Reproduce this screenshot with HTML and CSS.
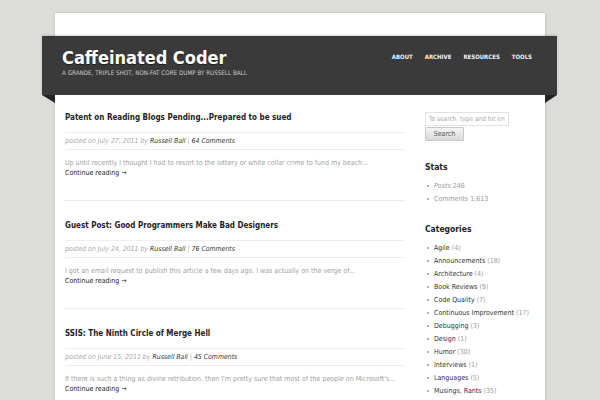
FILE: index.html
```html
<!DOCTYPE html>
<html>
<head>
<meta charset="utf-8">
<link rel="stylesheet" href="styles.css">
</head>
<body>
<div class="page">
  <header class="masthead">
    <div class="brand">
      <h1 class="site-title">Caffeinated Coder</h1>
      <p class="tagline">A GRANDE, TRIPLE SHOT, NON-FAT CORE DUMP BY RUSSELL BALL</p>
    </div>
    <nav class="nav">
      <a href="#">ABOUT</a>
      <a href="#">ARCHIVE</a>
      <a href="#">RESOURCES</a>
      <a href="#">TOOLS</a>
    </nav>
  </header>
  <div class="body">
    <main class="posts">
      <article class="post">
        <h2 class="post-title">Patent on Reading Blogs Pending...Prepared to be sued</h2>
        <p class="meta">posted on July 27, 2011 by <a href="#">Russell Ball</a> | <a href="#">64 Comments</a></p>
        <p class="excerpt">Up until recently I thought I had to resort to the lottery or white collar crime to fund my beach...<br><a class="more" href="#">Continue reading →</a></p>
      </article>
      <article class="post">
        <h2 class="post-title">Guest Post: Good Programmers Make Bad Designers</h2>
        <p class="meta">posted on July 24, 2011 by <a href="#">Russell Ball</a> | <a href="#">76 Comments</a></p>
        <p class="excerpt">I got an email request to publish this article a few days ago. I was actually on the verge of...<br><a class="more" href="#">Continue reading →</a></p>
      </article>
      <article class="post">
        <h2 class="post-title">SSIS: The Ninth Circle of Merge Hell</h2>
        <p class="meta">posted on June 15, 2011 by <a href="#">Russell Ball</a> | <a href="#">45 Comments</a></p>
        <p class="excerpt">If there is such a thing as divine retribution, then I'm pretty sure that most of the people on Microsoft's...<br><a class="more" href="#">Continue reading →</a></p>
      </article>
    </main>
    <aside class="sidebar">
      <form class="search">
        <input class="search-input" type="text" placeholder="To search, type and hit enter">
        <button class="search-btn" type="button">Search</button>
      </form>
      <h3 class="widget-title">Stats</h3>
      <ul class="list stats">
        <li><em>Posts</em> 246</li>
        <li>Comments 1,613</li>
      </ul>
      <h3 class="widget-title">Categories</h3>
      <ul class="list cats">
        <li><a href="#">Agile</a> <span class="count">(4)</span></li>
        <li><a href="#">Announcements</a> <span class="count">(18)</span></li>
        <li><a href="#">Architecture</a> <span class="count">(4)</span></li>
        <li><a href="#">Book Reviews</a> <span class="count">(9)</span></li>
        <li><a href="#">Code Quality</a> <span class="count">(7)</span></li>
        <li><a href="#">Continuous Improvement</a> <span class="count">(17)</span></li>
        <li><a href="#">Debugging</a> <span class="count">(3)</span></li>
        <li><a href="#">Design</a> <span class="count">(1)</span></li>
        <li><a href="#">Humor</a> <span class="count">(30)</span></li>
        <li><a href="#">Interviews</a> <span class="count">(1)</span></li>
        <li><a href="#">Languages</a> <span class="count">(5)</span></li>
        <li><a href="#">Musings, Rants</a> <span class="count">(35)</span></li>
      </ul>
    </aside>
  </div>
</div>
</body>
</html>
```
FILE: styles.css
```css
html, body { margin: 0; padding: 0; }
body {
  background: #dcdcd9;
  font-family: "DejaVu Sans Condensed", "DejaVu Sans", sans-serif;
  color: #333;
  height: 400px;
  overflow: hidden;
}
a { color: #333; text-decoration: none; }
.page {
  width: 490px;
  margin: 13px auto 0;
  padding-top: 23px;
  background: #fff;
  box-shadow: 1px 0 2px rgba(0,0,0,0.12), -1px 0 2px rgba(0,0,0,0.06);
}
.masthead {
  position: relative;
  margin: 0 -12px 0 -13px;
  height: 59px;
  background: #3a3a3a;
  display: flex;
  justify-content: space-between;
  align-items: flex-start;
  padding: 0 25px 0 20px;
  box-shadow: 0 -1px 2px rgba(0,0,0,0.15);
}
.masthead::before, .masthead::after {
  content: "";
  position: absolute;
  top: 100%;
  width: 0;
  height: 0;
  border-top: 8px solid #252525;
}
.masthead::before { left: 0; border-left: 13px solid transparent; }
.masthead::after { right: 0; border-right: 12px solid transparent; }
.site-title {
  margin: 0;
  padding-top: 11px;
  font-size: 18px;
  line-height: 22px;
  font-weight: bold;
  color: #fff;
  text-shadow: 0 1px 1px rgba(0,0,0,0.5);
}
.tagline {
  margin: 0;
  font-size: 6.25px;
  line-height: 8px;
  color: #c8c8c8;
}
.nav {
  display: flex;
  gap: 12px;
  margin-top: 17px;
}
.nav a {
  color: #f2f2f2;
  font-weight: bold;
  font-size: 6px;
  line-height: 8px;
}
.body {
  display: flex;
  padding: 0 0 0 10px;
  gap: 20px;
  height: 305px;
  overflow: hidden;
}
.posts { width: 340px; padding-top: 17px; }
.post {
  border-bottom: 1px solid #ececec;
  padding-bottom: 22px;
  margin-bottom: 19px;
}
.post-title {
  margin: 0;
  font-size: 8px;
  line-height: 12px;
  font-weight: bold;
  color: #1e1e1e;
  padding-bottom: 8px;
  border-bottom: 1px solid #eeeeee;
}
.meta {
  margin: 0;
  padding: 3px 0;
  font-size: 6.9px;
  line-height: 10px;
  font-style: italic;
  color: #a8a8a8;
  border-bottom: 1px solid #eeeeee;
}
.meta a { color: #333; }
.excerpt {
  margin: 8px 0 0;
  font-size: 7px;
  line-height: 10px;
  color: #a0a0a0;
}
.excerpt .more { color: #222; }
.sidebar { width: 120px; padding-top: 17px; }
.search { display: flex; flex-direction: column; align-items: flex-start; gap: 1px; margin: 0; }
.search-input {
  box-sizing: border-box;
  width: 84px;
  height: 14px;
  border: 1px solid #e2e2e2;
  padding: 0 3px;
  font-family: inherit;
  font-size: 6.5px;
  color: #999;
  outline: none;
}
.search-input::placeholder { color: #aaa; }
.search-btn {
  box-sizing: border-box;
  width: 39px;
  height: 14px;
  padding: 0;
  border: 1px solid #c9c9c9;
  border-radius: 1px;
  background: linear-gradient(#f4f4f4, #d9d9d9);
  font-family: inherit;
  font-size: 7px;
  color: #555;
}
.widget-title {
  margin: 20px 0 7px;
  font-size: 8.5px;
  line-height: 12px;
  font-weight: bold;
  color: #222;
}
.stats + .widget-title { margin-top: 17px; }
.list {
  list-style: none;
  margin: 0;
  padding: 0;
  font-size: 7px;
  line-height: 13px;
}
.list li { white-space: nowrap; }
.list li::before {
  content: "";
  display: inline-block;
  vertical-align: middle;
  width: 2px;
  height: 2px;
  border-radius: 50%;
  background: #999;
  margin: 0 5px 1px 2px;
}
.stats li { color: #999; }
.stats em { color: #999; }
.count { color: #999; }
```
